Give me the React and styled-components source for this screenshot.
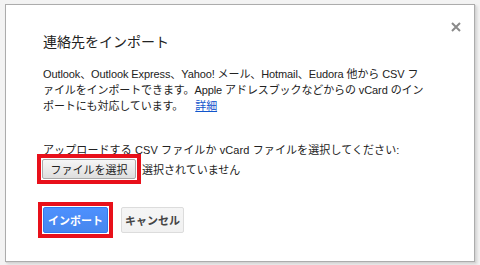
import React from "react";
import styled, { createGlobalStyle } from "styled-components";

const Global = createGlobalStyle`
  html, body { margin: 0; padding: 0; }
  body {
    background: #f3f3f3;
    width: 480px;
    height: 265px;
    overflow: hidden;
    font-family: "Liberation Sans", Arial, "Noto Sans CJK JP", sans-serif;
  }
`;

const Backdrop = styled.div`
  padding: 4px 0 0 5px;
  width: 480px;
  height: 265px;
  box-sizing: border-box;
`;

const Dialog = styled.div`
  position: relative;
  width: 470px;
  height: 258px;
  box-sizing: border-box;
  background: #fff;
  border: 1px solid #acacac;
  box-shadow: 1px 1px 0 #d4d4d4, 2px 2px 3px rgba(0, 0, 0, 0.15);
  padding: 29px 30px 0 37px;
  color: #222;
`;

const Close = styled.button`
  position: absolute;
  top: 15px;
  right: 11px;
  width: 14px;
  height: 14px;
  padding: 0;
  border: 0;
  background: transparent;
  display: flex;
  align-items: center;
  justify-content: center;
`;

const Title = styled.h1`
  margin: 0;
  font-size: 14px;
  font-weight: normal;
  line-height: 16px;
  height: 16px;
  color: #222;
`;

const Body = styled.p`
  margin: 16px 0 0;
  font-size: 11px;
  line-height: 16px;
  white-space: nowrap;
  letter-spacing: -0.1px;
`;

const Link = styled.a`
  color: #1155cc;
  text-decoration: underline;
  margin-left: 12px;
`;

const Label = styled.div`
  margin-top: 28px;
  font-size: 11px;
  line-height: 16px;
  white-space: nowrap;
  letter-spacing: 0.1px;
`;

const FileRow = styled.div`
  display: flex;
  align-items: center;
  margin-left: -6px;
  margin-top: -4px;
`;

const Highlight = styled.div`
  border: 4px solid #e8101a;
  padding: 1px;
  display: flex;
`;

const FileButton = styled.button`
  height: 20px;
  width: 94px;
  padding: 0;
  border: 1px solid #a9a9a9;
  border-radius: 2px;
  background: linear-gradient(#f6f6f6, #dedede);
  font-family: inherit;
  font-size: 11px;
  color: #222;
`;

const NoFile = styled.span`
  font-size: 11px;
  margin-left: 1px;
  white-space: nowrap;
`;

const Actions = styled.div`
  display: flex;
  align-items: center;
  gap: 8px;
  margin-top: 18px;
  margin-left: -5px;
`;

const ActionButton = styled.button`
  height: 26px;
  width: ${(p) => p.$w}px;
  padding: 0;
  border-radius: 2px;
  font-family: inherit;
  font-size: 11px;
  font-weight: bold;
  border: 1px solid ${(p) => (p.$primary ? "#3079ed" : "#dcdcdc")};
  background: ${(p) =>
    p.$primary ? "linear-gradient(#4d90fe, #4787ed)" : "linear-gradient(#f5f5f5, #f1f1f1)"};
  color: ${(p) => (p.$primary ? "#fff" : "#444")};
`;

export default function App() {
  return (
    <>
      <Global />
      <Backdrop>
        <Dialog>
          <Close aria-label="閉じる">
            <svg width="10" height="10" viewBox="0 0 10 10">
              <path d="M1 1L9 9M9 1L1 9" stroke="#8a8a8a" strokeWidth="2" />
            </svg>
          </Close>
          <Title>連絡先をインポート</Title>
          <Body>
            Outlook、Outlook Express、Yahoo! メール、Hotmail、Eudora 他から CSV フ
            <br />
            ァイルをインポートできます。Apple アドレスブックなどからの vCard のイン
            <br />
            ポートにも対応しています。
            <Link href="#">詳細</Link>
          </Body>
          <Label>アップロードする CSV ファイルか vCard ファイルを選択してください:</Label>
          <FileRow>
            <Highlight>
              <FileButton>ファイルを選択</FileButton>
            </Highlight>
            <NoFile>選択されていません</NoFile>
          </FileRow>
          <Actions>
            <Highlight>
              <ActionButton $primary $w={65}>インポート</ActionButton>
            </Highlight>
            <ActionButton $w={63}>キャンセル</ActionButton>
          </Actions>
        </Dialog>
      </Backdrop>
    </>
  );
}
